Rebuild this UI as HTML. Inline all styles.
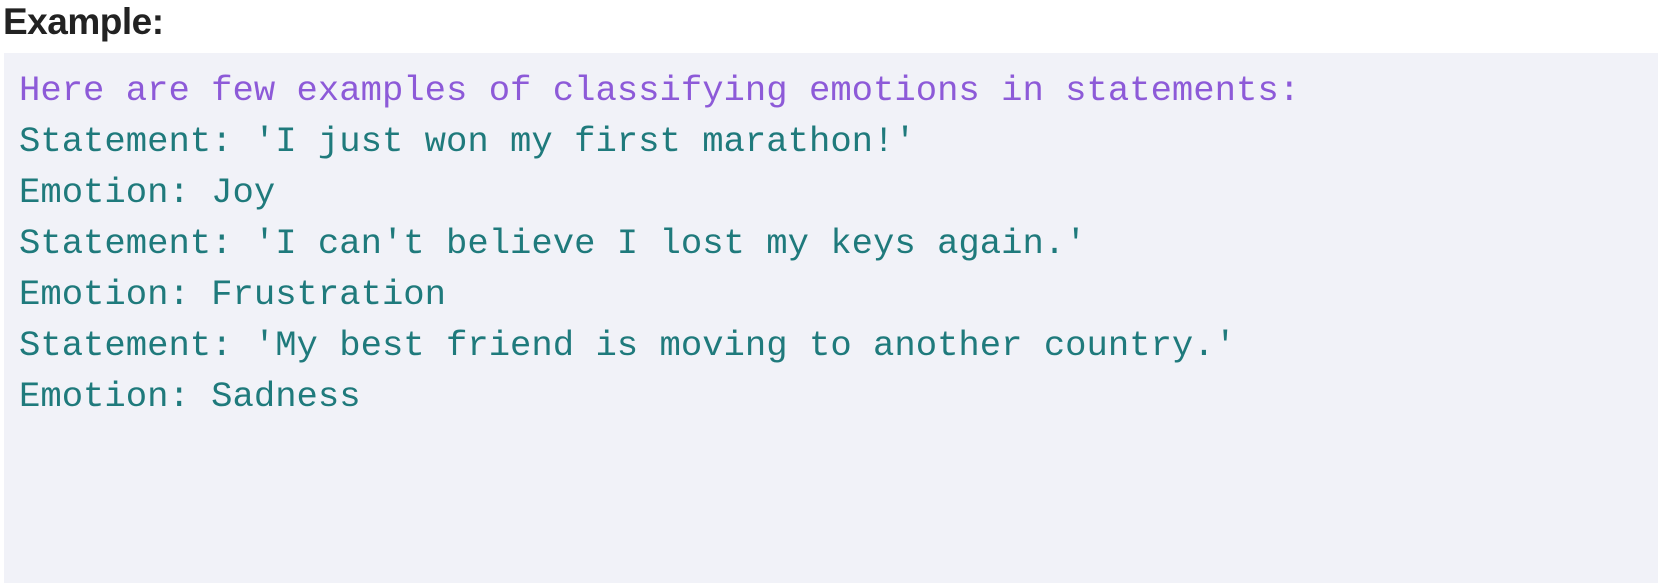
<!DOCTYPE html>
<html><head><style>
html,body{margin:0;padding:0;width:1670px;height:585px;background:#fff;overflow:hidden;font-family:"Liberation Sans",sans-serif}
h1{position:absolute;left:3px;top:1px;margin:0;font-size:37px;font-weight:bold;color:#222;letter-spacing:-0.5px}
.box{position:absolute;left:4px;top:53px;width:1654px;height:530px;background:#f1f2f8}
pre{position:absolute;left:19px;top:65px;margin:0;font-family:"Liberation Mono",monospace;font-size:35.6px;line-height:51px;color:#1f7a7c}
.p{color:#8d5ad8}
</style></head><body>
<h1>Example:</h1>
<div class="box"></div>
<pre><span class="p">Here are few examples of classifying emotions in statements:</span>
Statement: 'I just won my first marathon!'
Emotion: Joy
Statement: 'I can't believe I lost my keys again.'
Emotion: Frustration
Statement: 'My best friend is moving to another country.'
Emotion: Sadness</pre>
</body></html>
